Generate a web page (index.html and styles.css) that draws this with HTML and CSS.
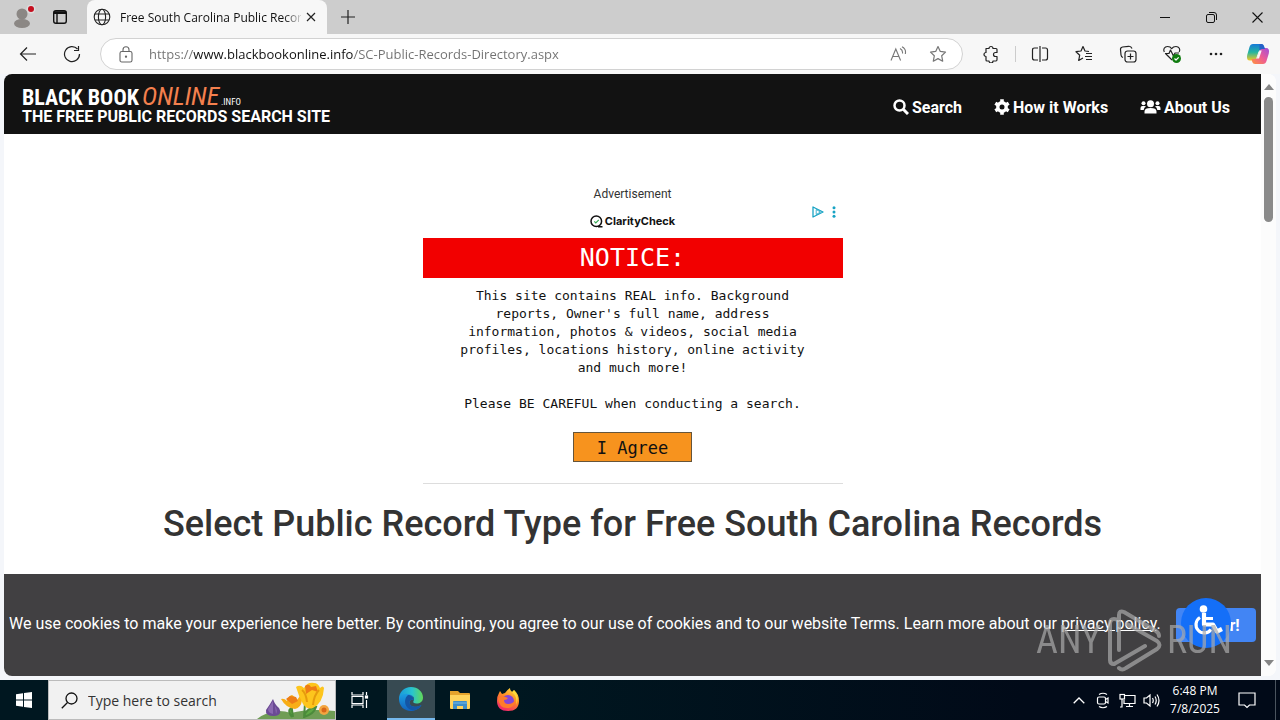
FILE: index.html
```html
<!DOCTYPE html>
<html lang="en">
<head>
<meta charset="utf-8">
<title>Free South Carolina Public Records</title>
<link rel="stylesheet" href="styles.css">
</head>
<body>
<div class="desktop">
  <header class="tabstrip">
    <button class="tab-tool profile" aria-label="Profile"><svg width="26" height="24" viewBox="0 0 26 24"><circle cx="12" cy="9" r="5.500" fill="#8b8784"/><ellipse cx="12" cy="18.500" rx="8" ry="4.500" fill="#8b8784"/><circle cx="21" cy="4" r="4.500" fill="#ddd"/><circle cx="21" cy="4" r="3" fill="#c50f1f"/></svg></button>
    <button class="tab-tool actions" aria-label="Tab actions"><svg width="16" height="16" viewBox="0 0 16 16" fill="none" stroke="#111" stroke-width="1.400"><rect x="1.700" y="1.700" width="12.600" height="12.600" rx="2.200"/><path d="M1.700 4.200h12.600M1.700 3h12.600M5 4v10"/></svg></button>
    <div class="tab">
      <svg width="18" height="18" viewBox="0 0 18 18" fill="none" stroke="#222" stroke-width="1.100"><circle cx="9" cy="9" r="7.800"/><ellipse cx="9" cy="9" rx="3.600" ry="7.800"/><path d="M2 6h14M2 12h14"/></svg>
      <span class="tab-title">Free South Carolina Public Records</span>
      <button class="close" aria-label="Close tab"><svg width="10" height="10" viewBox="0 0 10 10" stroke="#222" stroke-width="1.200"><path d="M1 1l8 8M9 1L1 9"/></svg></button>
    </div>
    <button class="new-tab" aria-label="New tab"><svg width="14" height="14" viewBox="0 0 14 14" stroke="#222" stroke-width="1.200"><path d="M7 0v14M0 7h14"/></svg></button>
    <div class="window-controls">
      <button aria-label="Minimize"><svg width="10" height="10" viewBox="0 0 10 10" stroke="#111"><path d="M0 5.500h10"/></svg></button>
      <button aria-label="Restore"><svg width="11" height="11" viewBox="0 0 11 11" fill="none" stroke="#111"><rect x=".5" y="2.500" width="8" height="8" rx="1.500"/><path d="M3 .5h5a2.500 2.500 0 0 1 2.500 2.500v5"/></svg></button>
      <button aria-label="Close"><svg width="11" height="11" viewBox="0 0 11 11" stroke="#111" stroke-width="1.100"><path d="M.5.5l10 10M10.500.5l-10 10"/></svg></button>
    </div>
  </header>

  <div class="toolbar">
    <button class="tool back" aria-label="Back"><svg width="18" height="16" viewBox="0 0 18 16" fill="none" stroke="#222" stroke-width="1.200"><path d="M17 8H1.500M8 1.500L1.500 8 8 14.500"/></svg></button>
    <button class="tool refresh" aria-label="Refresh"><svg width="18" height="18" viewBox="0 0 18 18" fill="none" stroke="#222" stroke-width="1.200"><path d="M16.500 9A7.500 7.500 0 1 1 14.500 4M15.500 1v4.500H11"/></svg></button>
    <div class="address">
      <svg width="14" height="17" viewBox="0 0 14 17" fill="none" stroke="#666" stroke-width="1.100"><rect x="1" y="5.500" width="12" height="10.500" rx="1.800"/><path d="M4 5.500V3.800a3 3 0 0 1 6 0v1.700"/><circle cx="7" cy="10.700" r=".6" fill="#666"/></svg>
      <input class="url" type="text" aria-label="Address" value="https://www.blackbookonline.info/SC-Public-Records-Directory.aspx">
      <button class="inline-tool" aria-label="Read aloud"><svg width="17" height="16" viewBox="0 0 17 16" fill="none" stroke="#777" stroke-width="1.100"><path d="M1 14.500L5.800 3l4.800 11.500M2.700 10.500h6.200M10 2.500c2 1 2.800 2.800 2.500 5M12 .8c3 1.500 4 4.200 3.300 7.200"/></svg></button>
      <button class="inline-tool" aria-label="Add to favorites"><svg width="18" height="18" viewBox="0 0 18 18" fill="none" stroke="#777" stroke-width="1.200" stroke-linejoin="round"><path d="M9 1.500l2.300 4.900 5.200.7-3.800 3.700 1 5.400L9 13.600l-4.700 2.600 1-5.400L1.500 7.100l5.200-.7z"/></svg></button>
    </div>
    <div class="tools">
      <button class="tool" aria-label="Extensions"><svg width="18" height="18" viewBox="0 0 18 18" fill="none" stroke="#222" stroke-width="1.200" stroke-linejoin="round"><path d="M4 3.500h3a2 2 0 1 1 4 0h3q1 0 1 1v3h-1.500a1.900 1.900 0 0 0 0 4H15v3q0 1.500-1 1.500h-3a2 2 0 0 1-4 0H5q-1 0-1-1v-3.500a2 2 0 1 1 0-4z"/></svg></button>
      <span class="divider"></span>
      <button class="tool" aria-label="Split screen"><svg width="18" height="18" viewBox="0 0 18 18" fill="none" stroke="#222" stroke-width="1.200"><path d="M9 1v16M7 3H3.500Q1.500 3 1.500 5v8q0 2 2 2H7M11 3h3.500q2 0 2 2v8q0 2-2 2H11"/></svg></button>
      <button class="tool" aria-label="Favorites"><svg width="18" height="18" viewBox="0 0 18 18" fill="none" stroke="#222" stroke-width="1.200" stroke-linejoin="round"><path d="M14 6.500L10 6 8 1.500 6 6l-5 .7 3.700 3.500-1 5.300L8 13M11 8.500h6M10 11.500h7M11 14.500h6"/></svg></button>
      <button class="tool" aria-label="Collections"><svg width="18" height="18" viewBox="0 0 18 18" fill="none" stroke="#222" stroke-width="1.200"><rect x="6" y="6" width="11" height="11" rx="2.500"/><path d="M11.500 8.500v6M8.500 11.500h6M4 12.500Q2.200 12 2 10L1.500 4.500Q1.300 2.500 3.500 2l6-.7Q12 1 13 3.500"/></svg></button>
      <button class="tool" aria-label="Browser essentials"><svg width="20" height="20" viewBox="0 0 20 20" fill="none" stroke="#222" stroke-width="1.200" stroke-linejoin="round"><path d="M10 16L3.500 9.500H7L8.500 6l3 6L13 9h4M2.300 8C.8 5.500 2.500 2.500 5.500 2.500c2 0 3.500 1 4.200 2.200C10.500 3.500 12 2.500 14 2.500c3 0 4.700 3 3.200 5.500"/><circle cx="14.500" cy="14.500" r="4.500" fill="#107c10" stroke="none"/><path d="M12.500 14.500l1.500 1.500 2.700-2.700" stroke="#fff"/></svg></button>
      <button class="tool" aria-label="More"><svg width="14" height="4" viewBox="0 0 14 4" fill="#222"><circle cx="2" cy="2" r="1.300"/><circle cx="7" cy="2" r="1.300"/><circle cx="12" cy="2" r="1.300"/></svg></button>
      <button class="tool copilot" aria-label="Copilot"><svg width="24" height="22" viewBox="0 0 24 22"><defs><linearGradient id="ca" x1="0" y1="0" x2="0" y2="1"><stop stop-color="#1679d8"/><stop offset=".5" stop-color="#24b5a0"/><stop offset="1" stop-color="#f2c824"/></linearGradient><linearGradient id="cb" x1="1" y1="0" x2="0" y2="1"><stop stop-color="#a04ddb"/><stop offset=".5" stop-color="#ee5b94"/><stop offset="1" stop-color="#ff943c"/></linearGradient></defs><path d="M7 1h8q2 0 2.700 2L19 7h-4q-2 0-2.600 2L10 16q-.6 1.500-2 1.500H4Q0 17.500 1.200 12L3.500 4Q4.300 1 7 1z" fill="url(#ca)"/><path d="M17 21H9q-2 0-2.700-2L5.500 16H9q2 0 2.600-2L14 7q.6-2 2-2h4q4 0 2.800 5.500L20.500 18q-.8 3-3.500 3z" fill="url(#cb)"/><path d="M13.500 1H16q1.500.3 2 2l1 3h-3q-2 0-2.600 2z" fill="#2462c8"/><path d="M13.500 7.500h2.200l-2.700 8h-2.200z" fill="#f7f7f7"/></svg></button>
    </div>
  </div>

  <main class="viewport">
    <div class="page">
      <div class="site-header">
        <a class="brand" href="#"><span class="logo"><span class="logo-main">BLACK BOOK</span><span class="logo-online">ONLINE</span><span class="logo-info">.INFO</span></span><span class="tagline">THE FREE PUBLIC RECORDS SEARCH SITE</span></a>
        <nav class="nav">
          <a href="#"><svg width="16" height="16" viewBox="0 0 16 16" fill="none" stroke="#fff" stroke-width="2.500"><circle cx="6.500" cy="6.500" r="5"/><path d="M10.500 10.500l4.500 4.500" stroke-width="3"/></svg>Search</a>
          <a href="#"><svg width="16" height="16" viewBox="0 0 16 16" fill="none" stroke="#fff"><circle cx="8" cy="8" r="4.200" stroke-width="3.400"/><path d="M8 .3v3M8 12.700v3M1.300 4.200l2.600 1.500M12.100 10.300l2.600 1.500M1.300 11.800l2.600-1.500M12.100 5.700l2.600-1.500" stroke-width="3.600"/></svg>How it Works</a>
          <a href="#"><svg width="21" height="16" viewBox="0 0 20 16" fill="#fff"><circle cx="10" cy="4.700" r="3.500"/><circle cx="3" cy="4.200" r="2"/><circle cx="17" cy="4.200" r="2"/><path d="M4 14.500v-2C4 10 6 9 10 9s6 1 6 3.500v2zM0 11V9q0-2 2-2h2q1 0 1.500.6Q3.500 8.500 3.200 11zM20 11V9q0-2-2-2h-2q-1 0-1.500.6 2 .9 2.300 3.400z"/></svg>About Us</a>
        </nav>
      </div>
      <div class="content">
        <p class="ad-label">Advertisement</p>
        <section class="ad">
          <div class="ad-brand"><svg width="13" height="13" viewBox="0 0 13 13" fill="none" stroke="#111" stroke-width="1.500"><circle cx="6.300" cy="6.300" r="5.300"/><path d="M8 11.700h4.500"/><path d="M4.300 6.300l1.500 1.500 3-3" stroke="#35a853" stroke-width="1.200"/></svg>ClarityCheck</div>
          <div class="ad-choices"><svg width="12" height="12" viewBox="0 0 12 12" fill="none" stroke="#17a3c4" stroke-width="1.300" stroke-linejoin="round"><path d="M1 1l10 5-10 5z"/><path d="M4.200 3.500v5L8.500 6z" stroke-width=".8"/></svg><svg width="4" height="12" viewBox="0 0 4 12" fill="#17a3c4"><circle cx="2" cy="1.700" r="1.500"/><circle cx="2" cy="6" r="1.500"/><circle cx="2" cy="10.300" r="1.500"/></svg></div>
          <h2 class="notice">NOTICE:</h2>
          <p class="ad-copy">This site contains REAL info. Background<br>reports, Owner's full name, address<br>information, photos &amp; videos, social media<br>profiles, locations history, online activity<br>and much more!</p>
          <p class="ad-copy">Please BE CAREFUL when conducting a search.</p>
          <button class="agree">I Agree</button>
        </section>
        <h1>Select Public Record Type for Free South Carolina Records</h1>
      </div>
      <div class="cookies">
        <p>We use cookies to make your experience here better. By continuing, you agree to our use of cookies and to our website Terms. Learn more about our <a href="#">privacy policy</a>.</p>
        <div class="confirm">
          <button class="roger">Roger!</button>
          <button class="access" aria-label="Accessibility"><svg width="50" height="50" viewBox="0 0 50 50" fill="none" stroke="#fff"><circle cx="22.500" cy="11" r="3.800" fill="#fff" stroke="none"/><path d="M23 15v11.500h9l4 7 5-2.500" stroke-width="4.200" stroke-linejoin="round"/><path d="M24 20.500h8" stroke-width="3"/><path d="M19 19.500a8.300 8.300 0 1 0 11 12" stroke-width="3.200"/></svg></button>
        </div>
      </div>
      <div class="watermark"><span>ANY</span><svg width="58" height="64" viewBox="0 0 58 64" fill="none" stroke="#aaa" stroke-width="4" stroke-linejoin="round" stroke-linecap="round"><path d="M14 42V7q0-5 5-3l32 19q3 2 3 5"/><path d="M9 56q-4 0-4-4V16q0-5 4-5 5 0 5 4"/><path d="M9 56l31-18M14 60q3 3 7 0l31-19q5-4 0-8L22 16"/></svg><span>RUN</span></div>
    </div>
    <div class="scrollbar"><span class="arrow-up"></span><span class="thumb"></span><span class="arrow-down"></span></div>
  </main>

  <footer class="taskbar">
    <button class="task start" aria-label="Start"><svg width="16" height="16" viewBox="0 0 16 16" fill="#fff"><path d="M0 2.200L7 1.200v6.300H0zM8 1l8-1v7.500H8zM0 8.500h7v6.300l-7-1zM8 8.500h8V16l-8-1.100z"/></svg></button>
    <label class="search"><svg width="17" height="17" viewBox="0 0 17 17" fill="none" stroke="#111" stroke-width="1.300"><circle cx="10.500" cy="6.500" r="5.500"/><path d="M6.500 10.500L.8 16.200"/></svg><input type="text" placeholder="Type here to search" aria-label="Type here to search">
      <svg class="flowers" width="78" height="38" viewBox="0 0 78 38"><path d="M0 38q16-12 34-6 18-5 44-2v8z" fill="#6f9d55"/><path d="M34 22l2 14M48 22l-1 15M47 36q2-9 12-10-2 7-12 10M35 36q-6-8 1-9" stroke="#4b8b3b" stroke-width="2" fill="#5fa845"/><path d="M16 18q2 6 6 9 4 7-5 8-9 0-8-6 3-4 7-11z" fill="#6b4a94"/><path d="M16 20v13q-5-1-5-5zM18 25q3 4 1 8" fill="#8a68b0"/><path d="M24 18q3-1 6 2 1-5 5-6 4 2 5 5l3-4q2 0 2 4-1 8-7 9-9-1-14-10z" fill="#f8ae16"/><path d="M29 18l4-3 6 1 2 4-6 3z" fill="#ed7d16"/><path d="M39 6q4-3 8 1 3-6 10-5 4 0 6 5 3-3 4 0-1 15-11 20-6 2-10-4-4-7-7-17z" fill="#fdc51d"/><path d="M48 5q4-3 6 1l5-1 2 6-6-2-6 4z" fill="#ed7d16"/><path d="M45 9q4 3 5 12M62 9q-5 5-6 15" stroke="#e59b0d" stroke-width="2" fill="none"/><circle cx="67" cy="29" r="5" fill="#f3a540"/><circle cx="67" cy="29" r="2.500" fill="#d86819"/></svg></label>
    <button class="task" aria-label="Task view"><svg width="18" height="16" viewBox="0 0 18 16" fill="none" stroke="#fff" stroke-width="1.200"><path d="M1 0v3h11V0M1 16v-3h11v3M1 4.500h11v7H1zM15.500 0v3M15.500 8v8"/><rect x="14.500" y="4" width="2" height="2" fill="#fff"/></svg></button>
    <button class="task active" aria-label="Microsoft Edge"><svg width="24" height="24" viewBox="0 0 24 24"><defs><linearGradient id="ea" x1="0" x2="1"><stop stop-color="#1998dc"/><stop offset=".55" stop-color="#29c4cf"/><stop offset="1" stop-color="#62d957"/></linearGradient><linearGradient id="eb" x1="0" y1="0" x2="0" y2="1"><stop stop-color="#1b9ee2"/><stop offset="1" stop-color="#1261bd"/></linearGradient></defs><path d="M0 12C0 5 5 0 12 0s12 5 12 10.500c0 4-3 6-6.500 6-2.500 0-4-1-3-2.500 1.500-2.500 0-6-4.500-6-5 0-9 2-10 6z" fill="url(#ea)"/><path d="M0 12c1-4 5-6 9-5 4 .5 6 3 5.500 6-1.500-1-4.500 0-4 3 .5 4 6 5 12 2-2 3.500-6 6-10.500 6C5 24 0 19 0 12z" fill="url(#eb)"/><path d="M9 8c-4 3-5 13 5 15.500 4-.5 7-2.500 8.500-5.500-6 3-11.500 2-12-2-.5-3 2.500-4 4-3C15 10 12 8 9 8z" fill="#1455a5"/></svg></button>
    <button class="task" aria-label="File Explorer"><svg width="22" height="20" viewBox="0 0 22 20"><path d="M1 1h8l2 2h9q1 0 1 1v4H1z" fill="#e5a32c"/><path d="M1 5h20v13q0 1-1 1H2q-1 0-1-1z" fill="#ffd35c"/><path d="M4 19v-7q0-1 1-1h12q1 0 1 1v7h-4v-3H8v3z" fill="#3d8ec9"/><path d="M4 13h14" stroke="#75b9e5"/></svg></button>
    <button class="task" aria-label="Firefox"><svg width="24" height="24" viewBox="0 0 24 24"><defs><linearGradient id="fa" x1=".8" y1="0" x2=".3" y2="1"><stop stop-color="#ffe13f"/><stop offset=".45" stop-color="#ff8a24"/><stop offset="1" stop-color="#f0246e"/></linearGradient></defs><path d="M3 5l1-2 2 3 3-1q2-3 5-5 0 3 3 4l1-2q5 4 5 11 0 10-11 10Q1 23 1 13q0-5 2-8z" fill="url(#fa)"/><circle cx="12" cy="13" r="6" fill="#8546d6"/><path d="M2 10q5-3 10 0-1 2-4 2 0 4 4 4 5 0 7-4-1 9-8 8-8 0-9-10z" fill="#ff7b2b"/><path d="M16 4q6 5 4 13 4-7-2-15z" fill="#ffdb3a"/></svg></button>
    <div class="tray">
      <button class="tray-icon" aria-label="Show hidden icons"><svg width="12" height="7" viewBox="0 0 12 7" fill="none" stroke="#fff" stroke-width="1.300"><path d="M.7 6.300L6 1l5.300 5.300"/></svg></button>
      <button class="tray-icon" aria-label="Meet now"><svg width="14" height="17" viewBox="0 0 14 17" fill="none" stroke="#fff" stroke-width="1.200"><rect x="1.500" y="5" width="8" height="7" rx="1.500"/><path d="M9.500 7.500l2.500-1.500v5l-2.500-1.500M3 2.500q4-2.500 8 0M3 14.500q4 2.500 8 0"/></svg></button>
      <button class="tray-icon" aria-label="Network"><svg width="17" height="15" viewBox="0 0 17 15" fill="none" stroke="#fff" stroke-width="1.200"><path d="M6 2.500h10v8H5V7M10.500 10.500v3M7 13.500h7M3 6v8H1"/><rect x="1" y="1.500" width="4.500" height="4.500"/></svg></button>
      <button class="tray-icon" aria-label="Volume"><svg width="17" height="15" viewBox="0 0 17 15" fill="none" stroke="#fff" stroke-width="1.200"><path d="M1 5h2.500L7 2v11l-3.500-3H1zM9.500 5q1.500 2.500 0 5M12 3.500q2.500 4 0 8M14 1.500q4 6 0 12"/></svg></button>
      <div class="clock"><span>6:48 PM</span><span>7/8/2025</span></div>
      <button class="tray-notice" aria-label="Notifications"><svg width="18" height="17" viewBox="0 0 18 17" fill="none" stroke="#fff" stroke-width="1.200"><path d="M1 1h16v12h-5.500L9 15.500 6.500 13H1z"/></svg></button>
      <span class="show-desktop"></span>
    </div>
  </footer>
</div>
</body>
</html>
```
FILE: styles.css
```css
* { box-sizing: border-box; }
body { margin: 0; font-family: Roboto, sans-serif; color: #333; }
button { border: 0; padding: 0; background: none; font: inherit; color: inherit; display: flex; align-items: center; justify-content: center; flex: none; }
svg { display: block; flex: none; }
p, h1, h2 { margin: 0; }
a { color: inherit; text-decoration: none; }
.desktop { display: flex; flex-direction: column; height: 100vh; overflow: hidden; background: #f4f6fa; }

.tabstrip { display: flex; align-items: center; height: 34px; background: #cdcdcd; flex: none; font-family: "Open Sans", sans-serif; }
.profile { width: 46px; height: 34px; }
.actions { width: 28px; }
.tab { display: flex; align-items: center; height: 34px; width: 240px; margin-left: 13px; padding: 0 10px 0 6px; background: #f7f7f7; border-radius: 8px 8px 0 0; }
.tab-title { flex: 1; margin-left: 9px; font-size: 12px; color: #111; white-space: nowrap; overflow: hidden; mask-image: linear-gradient(to right, #000 164px, transparent 184px); }
.close { width: 12px; margin-left: 4px; }
.new-tab { width: 42px; }
.window-controls { display: flex; margin-left: auto; }
.window-controls button { width: 46px; height: 34px; }

.toolbar { display: flex; align-items: center; height: 40px; flex: none; background: #f7f7f7; }
.tool { width: 44px; height: 32px; }
.back { margin-left: 6px; }
.refresh { margin-right: 6px; }
.address { flex: 1; display: flex; align-items: center; height: 32px; padding: 0 4px 0 18px; border: 1px solid #d2d2d2; border-radius: 16px; background: #fff; }
.url { flex: 1; min-width: 0; border: 0; outline: 0; margin-left: 16px; padding: 0; height: 24px; font: 13px "Open Sans", sans-serif; background: linear-gradient(to right, #717171 44px, #111 44px 205px, #717171 205px); background-clip: text; -webkit-background-clip: text; color: transparent; }
.inline-tool { width: 40px; height: 30px; }
.tools { display: flex; align-items: center; margin-left: 6px; margin-right: 2px; }
.copilot { width: 40px; }
.divider { width: 1px; height: 16px; margin-left: 2px; margin-right: 2px; background: #ccc; }

.viewport { display: flex; flex: 1; min-height: 0; margin: 0 4px 4px; border-radius: 8px; overflow: hidden; background: #fff; }
.page { position: relative; flex: 1; min-width: 0; display: flex; flex-direction: column; }
.site-header { display: flex; align-items: center; justify-content: space-between; height: 60px; padding: 0 31px 0 18px; background: #121212; color: #fff; flex: none; }
.brand { display: flex; flex-direction: column; }
.logo { display: flex; align-items: baseline; height: 26px; line-height: 28px; font-family: "Roboto Condensed", Roboto, sans-serif; font-weight: 700; white-space: nowrap; }
.logo-main { font-size: 22px; width: 120px; }
.logo-online { font-size: 26px; width: 79px; font-style: italic; font-weight: 400; color: #f4804e; }
.logo-info { font-size: 9px; font-weight: 400; }
.tagline { font-size: 16px; line-height: 18px; font-weight: 700; white-space: nowrap; }
.nav { display: flex; gap: 32px; margin-top: 6px; font-size: 16px; font-weight: 700; white-space: nowrap; }
.nav a { display: flex; align-items: center; gap: 3px; }
.content { flex: 1; min-height: 0; overflow: hidden; display: flex; flex-direction: column; align-items: center; padding-top: 52px; }
.ad-label { font-size: 12px; line-height: 16px; }
.ad { position: relative; width: 420px; height: 282px; display: flex; flex-direction: column; align-items: center; border-bottom: 1px solid #ddd; color: #111; font-family: "DejaVu Sans Mono", monospace; }
.ad-brand { display: flex; align-items: center; gap: 2px; height: 36px; padding-top: 2px; font: 700 11px Inter, sans-serif; }
.ad-choices { position: absolute; top: 4px; right: 7px; display: flex; gap: 8px; }
.notice { width: 100%; height: 40px; margin-bottom: 9px; background: #f20000; color: #fff; text-align: center; font-size: 25px; line-height: 40px; font-weight: 400; }
.ad-copy { margin-bottom: 18px; text-align: center; font-size: 13px; line-height: 18px; white-space: nowrap; }
.agree { width: 119px; height: 30px; margin-top: 1px; padding-top: 2px; border: 1px solid #66553a; background: #f7931e; font-size: 17px; }
h1 { margin-top: 18px; font-size: 36px; line-height: 44px; font-weight: 500; white-space: nowrap; }
.cookies { display: flex; align-items: center; justify-content: space-between; flex: none; height: 102px; padding: 0 5px; background: #414042; color: #fff; font-size: 16px; }
.cookies p { margin-bottom: 4px; white-space: nowrap; }
.cookies a { text-decoration: underline; }
.confirm { position: relative; }
.roger { width: 80px; height: 34px; border-radius: 4px; background: #4285f4; font-weight: 700; }
.access { position: absolute; left: 5px; top: -10px; width: 50px; height: 50px; border-radius: 50%; background: #146ff8; }
.watermark { position: absolute; right: 29px; bottom: 4px; display: flex; align-items: center; gap: 4px; height: 64px; opacity: .7; color: #aaa; font: 38px "Roboto Condensed", Roboto, sans-serif; pointer-events: none; }
.scrollbar { width: 15px; display: flex; flex-direction: column; align-items: center; padding: 10px 0; background: #fcfcfc; }
.arrow-up, .arrow-down { border: 5px solid transparent; border-top: 0; border-bottom: 6px solid #858585; }
.arrow-down { border-bottom: 0; border-top: 6px solid #858585; margin-top: auto; }
.thumb { width: 9px; height: 125px; margin-top: 7px; border-radius: 5px; background: #8a8a8a; }

.taskbar { display: flex; flex: none; height: 40px; background: linear-gradient(to right, #001720 40%, #010a18 80%); color: #fff; }
.task { width: 48px; height: 40px; }
.active { margin-left: 3px; margin-right: 1px; background: #374a52; border-bottom: 2px solid #76b9ed; }
.search { position: relative; display: flex; align-items: center; width: 288px; padding-left: 12px; background: #f1f1f1; border: 1px solid #bbb; }
.search input { flex: 1; min-width: 0; margin-left: 10px; padding: 0; border: 0; outline: 0; background: none; font: 14px "Open Sans", sans-serif; }
.search input::placeholder { color: #333; opacity: 1; }
.flowers { align-self: flex-end; }
.tray { display: flex; align-items: center; margin-left: auto; }
.tray-icon { width: 24px; height: 40px; }
.clock { display: flex; flex-direction: column; align-items: center; width: 64px; font: 12px/18px "Open Sans", sans-serif; white-space: nowrap; }
.tray-notice { width: 40px; height: 40px; }
.show-desktop { width: 5px; height: 40px; margin-left: 8px; border-left: 1px solid #4a545e; }
```
